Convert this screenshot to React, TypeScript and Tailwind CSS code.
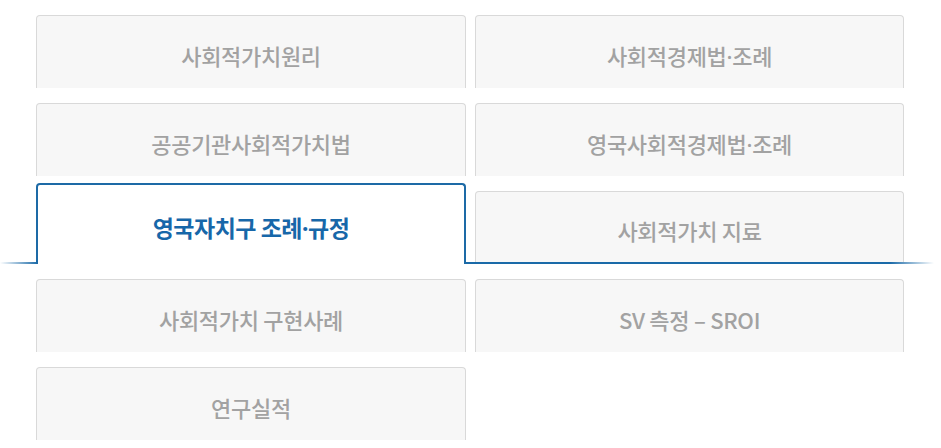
const tabs = [
  ['사회적가치원리', '사회적경제법·조례'],
  ['공공기관사회적가치법', '영국사회적경제법·조례'],
];

const lower = [['사회적가치 구현사례', 'SV 측정 – SROI'], ['연구실적']];

// the CJK font draws · full width, so set the dot in a latin face
const Label = ({ text }: { text: string }) => {
  const parts = text.split('·');
  return (
    <>
      {parts.map((p, i) => (
        <span key={i}>
          {i > 0 && <span className="font-['Noto_Sans']">·</span>}
          {p}
        </span>
      ))}
    </>
  );
};

const Tab = ({ label, h = 'h-[73px]' }: { label: string; h?: string }) => (
  <div
    className={`${h} flex items-center justify-center rounded-t-[4px] border border-b-0 border-[#d9d9d9] bg-[#f7f7f7] pt-[7px] text-[22px] font-medium tracking-[-0.3px] text-[#a2a2a2]`}
  >
    <Label text={label} />
  </div>
);

const App = () => (
  <div
    className="min-h-[448px] w-[941px] bg-white pt-[15px]"
    style={{ fontFamily: '"Noto Sans CJK KR", "Noto Sans", sans-serif' }}
  >
    {tabs.map((row) => (
      <div key={row[0]} className="mb-[15px] grid grid-cols-[430px_429px] gap-x-[9px] pl-[36px]">
        {row.map((t) => (
          <Tab key={t} label={t} />
        ))}
      </div>
    ))}

    <div className="mt-[-8px]">
      <div className="flex items-end gap-x-[9px] pl-[36px]">
        <div className="relative z-10 -mb-[2px] flex h-[81px] w-[430px] items-center justify-center rounded-t-[4px] border-2 border-b-0 border-[#1d6aa6] bg-white pt-[6px] text-[23px] font-bold tracking-[-0.5px] text-[#1767a9]">
          <Label text="영국자치구 조례·규정" />
        </div>
        <div className="w-[429px]">
          <Tab label="사회적가치 지료" h="h-[71px]" />
        </div>
      </div>
      <div className="h-[2px] w-full bg-[linear-gradient(to_right,#ffffff_0px,#1a6aa8_38px,#1a6aa8_890px,#ffffff_934px)]" />
    </div>

    <div className="mt-[15px]">
      {lower.map((row) => (
        <div key={row[0]} className="mb-[15px] grid grid-cols-[430px_429px] gap-x-[9px] pl-[36px]">
          {row.map((t) => (
            <Tab key={t} label={t} />
          ))}
        </div>
      ))}
    </div>
  </div>
);

export default App;
